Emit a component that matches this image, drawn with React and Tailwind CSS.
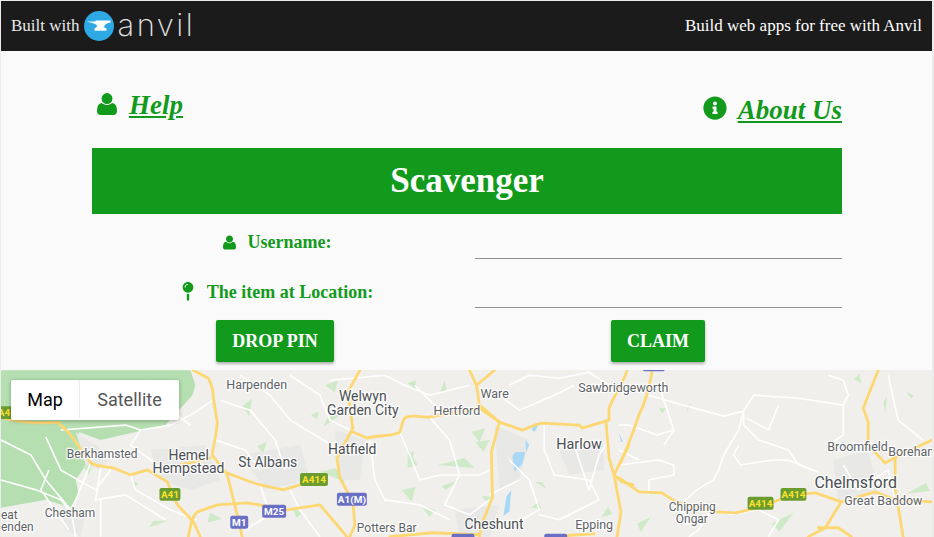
import React from 'react';
import { FaInfoCircle, FaMapPin } from 'react-icons/fa';

const UserIcon = ({ className }) => (
  <svg viewBox="0 0 1408 1536" className={className} fill="currentColor">
    <path d="M1408 1277q0 120-73 189.5t-194 69.5H267q-121 0-194-69.5T0 1277q0-53 3.5-103.5t14-109T44 956t43-97.5t62-81t85.5-53.5T346 704q9 0 42 21.5t74.5 48t108 48T704 843t133.5-21.5t108-48t74.5-48t42-21.5q61 0 111.5 20t85.5 53.5t62 81t43 97.5t26.5 108.5t14 109t3.5 103.5zm-320-893q0 159-112.5 271.5T704 768T432.5 655.5T320 384t112.5-271.5T704 0t271.5 112.5T1088 384z" />
  </svg>
);

const AnvilLogo = () => (
  <div className="flex items-center">
    <svg viewBox="0 0 30 30" className="w-[30px] h-[30px]">
      <circle cx="15" cy="15" r="15" fill="#2fa9e3" />
      <path d="M3 10.500h8.500V9.500h15v2c-3 .4-5.500 1.600-6.300 3.400-.4 1 .4 2 2.300 2.400v2.400H10.500v-2.400c2-.5 3-1.600 2.300-3-1-1.700-5.500-2.400-9.800-3.800z" fill="#fff" />
    </svg>
    <span className="ml-[3px] [font-family:'Inter',sans-serif] font-extralight text-[31px] leading-none text-[#e4e4e4] tracking-[2.5px] -mt-[4px]">anvil</span>
  </div>
);

// labels sit in page coordinates, the svg viewBox starts at y=370
const labels = [
  ['Harpenden', 226, 389, 12.5],
  ['Welwyn', 339, 401, 14],
  ['Garden City', 327, 415, 14],
  ['Hertford', 434, 415, 12.5],
  ['Ware', 481, 398, 12.5],
  ['Sawbridgeworth', 579, 392, 12.5],
  ['Harlow', 557, 449, 14.5],
  ['Broomfield', 829, 451, 12.5],
  ['Boreham', 890, 456, 12.5],
  ['Berkhamsted', 66, 458, 12],
  ['Hemel', 168, 460, 14],
  ['Hempstead', 152, 473, 14],
  ['St Albans', 238, 467, 14],
  ['Hatfield', 328, 454, 14],
  ['Chelmsford', 816, 488, 16],
  ['Great Baddow', 846, 505, 12.5],
  ['Chipping', 670, 511, 12],
  ['Ongar', 677, 523, 12],
  ['Chesham', 44, 517, 12],
  ['Potters Bar', 357, 532, 12],
  ['Cheshunt', 465, 529, 14],
  ['Epping', 576, 529, 12.5],
  ['eat', 0, 519, 12],
  ['enden', 0, 531, 12],
];

const badges = [
  ['A4', -6, 406, 18, 'g'],
  ['A41', 159, 488, 21, 'g'],
  ['A414', 300, 473, 28, 'g'],
  ['A414', 749, 497, 26, 'g'],
  ['A414', 782, 488, 26, 'g'],
  ['A1(M)', 337, 493, 30, 'p'],
  ['M25', 262, 505, 24, 'p'],
  ['M1', 230, 516, 18, 'p'],
  ['', 452, 534, 23, 'p'],
  ['', 545, 534, 23, 'p'],
  ['', 644, 358, 22, 'p'],
];

const yellowRoads = [
  'M0 416 C10 422 40 424 57 422 C66 430 74 440 77 445 L90 463 C100 468 105 466 113 468 L130 475 L147 470 L167 482 C172 495 176 503 177 505 L193 522 L200 537',
  'M193 370 L208 378 C212 385 213 392 213 398 L217 422 C216 440 212 448 212 455 L227 475 L237 515 L242 537',
  'M180 465 L210 458',
  'M227 473 C240 478 250 482 260 485 L283 490 L300 485 L310 483',
  'M360 370 L348 392 L353 428 L337 458 L340 478 L353 502 L355 525 L350 537',
  'M353 432 L367 438 C380 435 395 436 400 432 C403 424 403 417 407 417 C415 414 425 418 430 417 L480 408 L500 422 L523 430 C530 428 535 424 543 423 L580 425 L583 428 L610 420 L610 408 C615 395 625 382 628 370',
  'M470 370 L477 385 L480 405 L500 422 L492 452 L493 498 L482 525 L480 537',
  'M495 370 L477 385',
  'M607 422 L610 458 L615 475 L622 512 L618 537',
  'M630 445 L615 475 L623 482 L634 485',
  'M653 372 C650 390 645 405 640 415 C633 435 628 450 620 465',
  'M620 478 L640 492 L663 493 L677 502 L717 512 L737 513 L763 507 L793 495 L817 493 L843 502 L877 492 L897 500 L934 502',
  'M880 370 L865 408 L870 422 L870 445 L887 463 L896 458 L934 440',
  'M897 458 L897 488 L905 537',
  'M843 502 L827 528 L810 537',
  'M820 528 L840 528 L853 537',
  'M188 537 C190 525 192 516 197 512 L217 505 L247 503 L287 510 L320 505 L337 525 L347 537',
  'M390 537 L433 533 L480 535',
  'M565 536 L595 534',
];

const whiteRoads = [
  'M45 437 L60 470 L95 490 L110 470',
  'M0 440 L30 455 L45 480 L70 510 L75 537',
  'M0 480 L35 490 L60 500 L68 510',
  'M48 470 L40 490 L68 530',
  'M90 463 L75 500 L70 510',
  'M60 430 L125 425 L140 430 L170 425 L190 415 L213 400',
  'M140 430 L130 445 L150 460 L160 470',
  'M100 468 L95 500 L125 495 L165 520',
  'M130 475 L135 490 L170 510 L195 520',
  'M150 380 L170 410 L190 425',
  'M220 400 L250 410 L275 440 L285 470',
  'M240 375 L270 395 L290 420 L340 450',
  'M215 440 L245 450 L260 470',
  'M290 375 L320 395 L330 420 L350 430',
  'M260 485 L270 515 L245 530',
  'M290 490 L300 510 L320 537',
  'M330 380 L385 375 L405 385 L430 395 L470 385',
  'M400 432 L410 455 L420 480 L440 475 L480 475 L490 470',
  'M430 417 L450 440 L460 475 L445 505 L470 515 L490 500',
  'M370 440 L375 480 L385 500 L420 505 L450 520',
  'M415 385 L440 410',
  'M510 385 L530 375 L560 378 L590 372 L610 385',
  'M500 395 L520 410 L555 395 L575 385',
  'M545 425 L545 450 L555 475 L590 480 L600 500 L560 520 L540 515',
  'M510 460 L530 480 L540 510 L505 530',
  'M520 480 L490 495',
  'M575 445 L590 490 L600 455 L610 440',
  'M650 395 L685 405 L725 416 L745 411 L755 395 L800 398 L845 405',
  'M660 385 L670 415 L675 430 L665 445',
  'M620 425 L630 425 L658 435 L675 430',
  'M745 411 L740 430 L725 455 L720 470 L715 480 L698 490 L685 502',
  'M745 411 L745 425 L760 440 L790 450 L800 465 L820 472',
  'M740 445 L735 455 L742 465 L760 462 L775 460 L790 460 L815 470',
  'M780 405 L770 430 L748 418',
  'M845 405 L850 395 L845 380 L830 375',
  'M845 405 L845 435 L830 445',
  'M620 465 L660 460 L675 465 L675 475 L650 480 L650 495',
  'M620 450 L640 460',
  'M712 512 L700 530 L690 537',
  'M730 515 L760 510 L780 520 L770 537',
  'M845 465 L860 490 L890 470 L897 500',
  'M870 440 L880 450 M890 375 L900 420 L925 440',
  'M100 500 L100 537',
];

const lightGreen = [
  [325, 385, 338, 380, 335, 392], [408, 383, 416, 380, 417, 390], [445, 380, 447, 390, 440, 393],
  [415, 450, 412, 462, 408, 456], [408, 448, 418, 465, 408, 468], [438, 465, 465, 458, 475, 468],
  [442, 486, 460, 480, 446, 490], [402, 490, 416, 487, 412, 502], [422, 507, 436, 510, 430, 517],
  [472, 432, 486, 428, 480, 442], [476, 442, 490, 440, 484, 452], [482, 496, 492, 497, 488, 503],
  [536, 482, 543, 482, 547, 489], [532, 508, 539, 502, 542, 509], [609, 507, 613, 514, 602, 518],
  [320, 472, 336, 468, 345, 482], [345, 412, 328, 417, 323, 427], [660, 408, 668, 408, 663, 413],
  [692, 403, 688, 413, 689, 406], [856, 379, 861, 374, 863, 383], [885, 402, 889, 397, 887, 412],
  [908, 392, 916, 395, 913, 398], [652, 517, 638, 524, 642, 532], [773, 524, 795, 513, 781, 532],
  [908, 494, 928, 483, 932, 491], [242, 406, 252, 398, 249, 416], [311, 415, 319, 411, 317, 419],
  [257, 446, 267, 442, 263, 453], [210, 513, 222, 519, 207, 523], [153, 521, 167, 521, 148, 528],
  [82, 466, 92, 464, 88, 475], [131, 481, 138, 483, 134, 488], [292, 507, 302, 514, 296, 518],
];

const water = [
  [513, 456, 516, 452, 526, 452, 523, 464, 515, 472], [507, 497, 512, 490, 510, 512, 504, 516],
  [526, 440, 530, 445, 527, 452], [541, 422, 535, 432, 532, 429],
  [620, 433, 624, 442, 622, 442], [895, 481, 898, 481, 897, 488], [844, 441, 848, 445, 845, 448],
];

const MapCanvas = () => (
  <svg viewBox="0 370 934 167" className="block w-full h-[167px] bg-[#f0efec]">
    <polygon points="0,370 190,370 195,385 192,395 165,425 135,432 100,440 78,432 85,465 75,480 78,495 70,508 45,500 0,508" fill="#b5dfb0" />
    {/* built up areas */}
    <g fill="#e8e8e7">
      <polygon points="75,432 110,455 100,470 85,465" />
      <polygon points="150,450 205,445 220,480 190,490 160,480" />
      <polygon points="240,455 300,445 310,480 265,490" />
      <polygon points="335,430 365,440 360,480 340,480" />
      <polygon points="495,425 530,440 520,480 500,490" />
      <polygon points="560,450 605,445 605,470 570,475" />
      <polygon points="835,460 870,450 880,495 840,500" />
      <polygon points="455,510 500,505 490,537 460,537" />
      <polygon points="60,505 85,510 80,537 65,530" />
    </g>
    <g fill="#cfeac8">
      {lightGreen.map((p, i) => <polygon key={i} points={p.join(',')} />)}
    </g>
    <g fill="#a9d8f7">
      {water.map((p, i) => <polygon key={i} points={p.join(',')} />)}
    </g>
    <g fill="none" stroke="#fff" strokeWidth="1.6" strokeLinejoin="round">
      {whiteRoads.map((d, i) => <path key={i} d={d} />)}
    </g>
    <g fill="none" stroke="#fdd772" strokeWidth="2.8" strokeLinejoin="round" strokeLinecap="round">
      {yellowRoads.map((d, i) => <path key={i} d={d} />)}
    </g>
    <g className="[font-family:'Roboto',sans-serif]" stroke="#fff" strokeWidth="2.5" strokeOpacity="0.85" paintOrder="stroke">
      {labels.map(([text, x, y, size]) => (
        <text key={text + x} x={x} y={y} fontSize={size} fill={size >= 14 ? '#4b4f53' : '#5f6367'}>{text}</text>
      ))}
    </g>
    <g className="[font-family:'Roboto',sans-serif]">
      {badges.map(([text, x, y, w, kind], i) => (
        <g key={i}>
          <rect x={x} y={y} width={w} height={13} rx="2" fill={kind === 'g' ? '#6b9c30' : '#6a6fc6'} />
          <text x={x + w / 2} y={y + 10} fontSize="10" fontWeight="700" textAnchor="middle" fill={kind === 'g' ? '#fde02f' : '#fff'}>{text}</text>
        </g>
      ))}
    </g>
  </svg>
);

const FormLabel = ({ icon, children }) => (
  <div className="flex items-center justify-center font-bold text-[18px] leading-none text-[#129a1c]">
    {icon}
    <span>{children}</span>
  </div>
);

export default function App() {
  return (
    <div className="relative h-[537px] w-[934px] overflow-hidden bg-[#fafafa] [font-family:'Liberation_Serif',serif] border-t border-l border-r-2 border-[#ececec]">
      <header className="h-[50px] bg-[#1b1b1b] flex items-center justify-between pl-[10px] pr-[10px] text-white text-[17px]">
        <div className="flex items-center text-[#e8e8e8]">
          <span className="mr-[5px]">Built with</span>
          <AnvilLogo />
        </div>
        <span>Build web apps for free with Anvil</span>
      </header>

      <main className="pl-[91px] pr-[90px]">
        <div className="flex justify-between h-[97px]">
          <a className="flex items-start pl-[5px] pt-[35px] text-[#129a1c] font-bold italic text-[27px] leading-[38px]">
            <UserIcon className="w-[20px] h-[24px] mt-[6px] mr-[12px]" />
            <span className="underline">Help</span>
          </a>
          <a className="flex items-start pt-[40px] text-[#129a1c] font-bold italic text-[27px] leading-[38px]">
            <FaInfoCircle className="w-[24px] h-[24px] mt-[5px] mr-[11px]" />
            <span className="underline">About Us</span>
          </a>
        </div>

        <h1 className="h-[66px] flex items-center justify-center bg-[#129a1c] text-white font-bold text-[35px]">Scavenger</h1>

        <div className="grid grid-cols-[367px_367px] gap-x-4 mt-[5px]">
          <div className="h-[40px] flex items-end justify-center pl-[3px] pb-[8px]">
            <FormLabel icon={<UserIcon className="w-[13px] h-[15px] mr-[12px]" />}>Username:</FormLabel>
          </div>
          <input className="h-[40px] bg-transparent border-b border-[#8f8f8f] outline-none" />
          <div className="h-[49px] flex items-end justify-center pl-[3px] pb-[7px]">
            <FormLabel icon={<FaMapPin className="w-[14px] h-[19px] mr-[12px] -mt-[2px]" />}>The item at Location:</FormLabel>
          </div>
          <input className="h-[49px] bg-transparent border-b border-[#8f8f8f] outline-none" />
        </div>

        <div className="grid grid-cols-[367px_367px] gap-x-4 mt-[12px]">
          <div className="flex justify-center pr-[1px]">
            <button className="h-[42px] w-[118px] rounded-[2px] bg-[#129a1c] text-white font-bold text-[18px] shadow-[0_2px_3px_rgba(0,0,0,0.3)]">DROP PIN</button>
          </div>
          <div className="flex justify-center pr-[1px]">
            <button className="h-[42px] w-[94px] rounded-[2px] bg-[#129a1c] text-white font-bold text-[18px] shadow-[0_2px_3px_rgba(0,0,0,0.3)]">CLAIM</button>
          </div>
        </div>
      </main>

      <div className="absolute left-0 right-0 top-[369px]">
        <MapCanvas />
        <div className="absolute left-[10px] top-[10px] flex h-[40px] pb-[2px] bg-white rounded-[2px] shadow-[0_1px_4px_rgba(0,0,0,0.3)] [font-family:'Roboto',sans-serif] text-[18px]">
          <div className="w-[69px] flex items-center justify-center text-black border-r border-[#ebebeb]">Map</div>
          <div className="w-[99px] flex items-center justify-center text-[#565656]">Satellite</div>
        </div>
      </div>
    </div>
  );
}
